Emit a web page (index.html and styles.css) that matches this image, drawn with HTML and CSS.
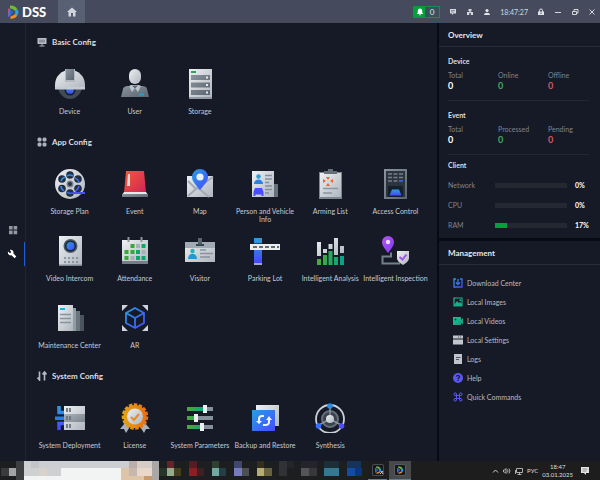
FILE: index.html
```html
<!DOCTYPE html>
<html lang="en">
<head>
    <meta charset="UTF-8">
    <meta name="viewport" content="width=device-width, initial-scale=1.0">
    <title>DSS</title>
    <link rel="stylesheet" href="styles.css">
</head>
<body>
    <!-- shared gradients and symbols -->
    <svg class="defs" aria-hidden="true">
        <defs>
            <linearGradient id="light" x1="0" y1="0" x2="1" y2="1"><stop offset="0" stop-color="#eef0f2"/><stop offset="1" stop-color="#aeb5be"/></linearGradient>
            <linearGradient id="grey" x1="0" y1="0" x2="1" y2="1"><stop offset="0" stop-color="#8b959f"/><stop offset="1" stop-color="#5b6570"/></linearGradient>
            <linearGradient id="blue" x1="0" y1="0" x2="0" y2="1"><stop offset="0" stop-color="#28a0e0"/><stop offset="1" stop-color="#4747ff"/></linearGradient>
            <linearGradient id="sky" x1="0" y1="0" x2="1" y2="1"><stop offset="0" stop-color="#289ee0"/><stop offset="1" stop-color="#464cff"/></linearGradient>
            <linearGradient id="green" x1="0" y1="0" x2="1" y2="0"><stop offset="0" stop-color="#4eaa30"/><stop offset="1" stop-color="#00a58c"/></linearGradient>
            <linearGradient id="teal" x1="0" y1="0" x2="1" y2="1"><stop offset="0" stop-color="#24c08e"/><stop offset="1" stop-color="#109a82"/></linearGradient>
            <linearGradient id="red" x1="0" y1="0" x2="1" y2="1"><stop offset="0" stop-color="#f35b35"/><stop offset="1" stop-color="#d02359"/></linearGradient>
            <linearGradient id="purple" x1="0" y1="0" x2="1" y2="1"><stop offset="0" stop-color="#b557e5"/><stop offset="1" stop-color="#8238ff"/></linearGradient>
            <linearGradient id="orange" x1="0" y1="0" x2="1" y2="0"><stop offset="0" stop-color="#e3a316"/><stop offset="1" stop-color="#e96f16"/></linearGradient>
            <linearGradient id="edge" x1="0" y1="0" x2="0" y2="1"><stop offset="0" stop-color="#e8455a"/><stop offset="1" stop-color="#2b7cf0"/></linearGradient>
        </defs>
        <symbol id="logo" viewBox="0 0 12 14">
            <path d="M1 3.500l2 .5v7L1 12z" fill="url(#edge)"/>
            <path d="M3 3.500l3.500 3.500L3 11z" fill="#2469d8"/>
            <path d="M3 .5C6 .3 9 1.500 10.300 4L7.500 5.800C6.500 4.300 5 3.500 3 3.500z" fill="#74bb2f"/>
            <path d="M10.300 4c1.600 2 1.400 4.700 0 6.700L7.800 9c.8-1.200.7-2.200-.3-3.200z" fill="#22a6e6"/>
            <path d="M10.300 10.700C8.500 13 6 14 3 13.500L4 11c1.700 0 3-.8 3.800-2z" fill="#f78b22"/>
        </symbol>
    </svg>

    <header class="titlebar">
        <div class="brand">
            <svg class="logo" aria-hidden="true"><use href="#logo"/></svg>
            <span>DSS</span>
        </div>
        <button class="home" aria-label="Home">
            <svg width="10" height="10" viewBox="0 0 10 10"><path d="M5 .5L.5 4.500V5H1.500v4.500h2.500V6h2v3.500h2.500V5h1v-.5z" fill="#d2d5dc"/></svg>
        </button>
        <div class="tools">
            <button class="alarm" aria-label="Alarms">
                <span class="bell"><svg width="8" height="8" viewBox="0 0 8 8"><path d="M4 .5C2.500.5 1.800 1.700 1.800 3v1.500L.8 6h6.400l-1-1.500V3C6.200 1.700 5.500.5 4 .5zM3 6.500h2c0 1.200-2 1.200-2 0z" fill="#fff"/></svg></span>
                <span class="count">0</span>
            </button>
            <button class="tool" aria-label="Messages"><svg width="8" height="8" viewBox="0 0 8 8"><path d="M1 1h6v4.500H4.500L3 7V5.500H1z" fill="#d5d7dc"/><path d="M2 2.500h4M2 4h3" stroke="#6b7080" stroke-width=".7"/></svg></button>
            <button class="tool" aria-label="Network"><svg width="8" height="8" viewBox="0 0 8 8"><path d="M2.500 1h3v2.200H4.500v.8H7V7H4.800V4.900H3.200V7H1V4h2.500v-.8h-1z" fill="#d5d7dc"/></svg></button>
            <button class="tool" aria-label="Account"><svg width="8" height="8" viewBox="0 0 8 8"><circle cx="4" cy="2.500" r="1.600" fill="#e2e4e8"/><path d="M1 7c0-3 6-3 6 0z" fill="#e2e4e8"/></svg></button>
            <time class="clock">18:47:27</time>
            <button class="tool" aria-label="Lock"><svg width="8" height="8" viewBox="0 0 8 8"><path d="M2.500 4V2.500a1.500 1.500 0 013 0V4" fill="none" stroke="#e2e4e8"/><path d="M1 3.500h6V7H1z" fill="#e2e4e8"/><path d="M4 4.500v1.500" stroke="#454a5c"/></svg></button>
            <button class="tool" aria-label="Minimize"><svg width="8" height="8" viewBox="0 0 8 8"><path d="M1 4.500h6" stroke="#d5d7dc"/></svg></button>
            <button class="tool" aria-label="Restore"><svg width="8" height="8" viewBox="0 0 8 8"><path d="M1.500 3.500h4v3h-4zM3 3.500v-2h4v3.500H5.500" fill="none" stroke="#d5d7dc"/></svg></button>
            <button class="tool" aria-label="Close"><svg width="8" height="8" viewBox="0 0 8 8"><path d="M1.500 1.500l5 5m0-5l-5 5" stroke="#d5d7dc"/></svg></button>
        </div>
    </header>

    <div class="workspace">
        <nav class="sidebar">
            <button aria-label="Applications"><svg width="10" height="10" viewBox="0 0 10 10"><path d="M1 1h3.600v3.600H1zM5.600 1h3.600v3.600H5.600zM1 5.600h3.600v3.600H1zM5.600 5.600h3.600v3.600H5.600z" fill="#9597a0"/></svg></button>
            <button class="active" aria-label="Configuration"><svg width="10" height="10" viewBox="0 0 10 10"><path d="M1 2.500l2 1.800L4.300 3 2.800 1C5 .3 7.200 2 6.300 4.300L9.300 7.500 7.600 9.200 4.500 6.300C2.300 7 .3 4.800 1 2.500z" fill="#fff"/></svg></button>
        </nav>

        <main class="content">
            <section class="group">
                <h2><svg width="10" height="10" viewBox="0 0 10 10"><path d="M.5 1h9v6h-9z" fill="#b9bcc5"/><path d="M2 2.500h6v3H2z" fill="#8b909b"/><path d="M5 7v1.500M2.500 9h5" stroke="#b9bcc5"/></svg>Basic Config</h2>
                <div class="tiles">
                    <button class="tile">
                        <svg viewBox="0 0 30 30"><path d="M3 19h24c-1 6-6 11-12 11S4 25 3 19z" fill="#404b55"/><circle cx="15" cy="21" r="5.500" fill="#172130"/><circle cx="15" cy="21" r="3.800" fill="url(#blue)"/><path d="M0 20v-4C0 7 7 1 15 1s15 6 15 15v4z" fill="url(#light)"/><path d="M0 18h30v2.500H0z" fill="#c6cbd1"/><path d="M10 0h10v13H10z" fill="#b2b9c1"/><path d="M11 0h8v11h-8z" fill="url(#grey)"/></svg>
                        <span>Device</span>
                    </button>
                    <button class="tile">
                        <svg viewBox="0 0 30 30"><rect x="9" y="0" width="12" height="15" rx="6" fill="url(#light)"/><path d="M1 28l2-8q0-2 4-3h16q4 1 4 3l2 8z" fill="url(#grey)"/><path d="M9 17l3 6 3-4 3 4 3-6-2-1h-8z" fill="#bcc3ca"/><path d="M12 16.500h6l-3 3z" fill="#5a6570"/><path d="M19 24.500h5v2h-5z" fill="#12a5dc"/></svg>
                        <span>User</span>
                    </button>
                    <button class="tile">
                        <svg viewBox="0 0 30 30"><path d="M4 0h23v30H4z" fill="url(#light)"/><path d="M6 2h5v2H6z" fill="#1fae4a"/><path d="M6 6h19v5H6zM6 13.500h19v5H6zM6 21h19v5H6z" fill="url(#grey)"/><path d="M21 7.500h2v2h-2zM21 15h2v2h-2zM21 22.500h2v2h-2z" fill="#e6e9eb"/><path d="M4 28h23v2H4z" fill="#8e98a2"/></svg>
                        <span>Storage</span>
                    </button>
                </div>
            </section>

            <section class="group">
                <h2><svg width="10" height="10" viewBox="0 0 10 10"><g fill="#aeb2bd"><rect x=".5" y=".5" width="4" height="4" rx="1.500"/><rect x="5.500" y=".5" width="4" height="4" rx="1.500"/><rect x=".5" y="5.500" width="4" height="4" rx="1.500"/><rect x="5.500" y="5.500" width="4" height="4" rx="1.500"/></g></svg>App Config</h2>
                <div class="tiles">
                    <button class="tile">
                        <svg viewBox="0 0 30 30"><circle cx="15" cy="15" r="15" fill="url(#light)"/><g fill="#222e3d"><circle cx="15" cy="6" r="3.800"/><circle cx="23" cy="10" r="3.800"/><circle cx="23" cy="19.500" r="3.800"/><circle cx="15" cy="24" r="3.800"/><circle cx="7" cy="19.500" r="3.800"/><circle cx="7" cy="10" r="3.800"/></g><g fill="none" stroke="url(#sky)" stroke-width="1.600"><path d="M12 7q3-2 6 0M20 9q3 1 4 4M24 17q-1 4-4 5M17 24q-3 1-5-1M9 22q-3-2-3-5M6 12q1-3 4-4"/></g><circle cx="15" cy="15" r="3.500" fill="#77818d"/><circle cx="15" cy="15" r="2" fill="#253241"/><path d="M18 23h12v2H16z" fill="#4c4eff"/></svg>
                        <span>Storage Plan</span>
                    </button>
                    <button class="tile">
                        <svg viewBox="0 0 30 30"><path d="M6 2h18l2 22H4z" fill="url(#red)"/><path d="M8 5h2v12H7z" fill="#ffd8d2"/><path d="M4 23h22l2 3H2z" fill="#e6e8ea"/><path d="M2 25h26v3H2z" fill="url(#grey)"/></svg>
                        <span>Event</span>
                    </button>
                    <button class="tile">
                        <svg viewBox="0 0 30 30"><path d="M2 7h26v21H2z" fill="url(#light)"/><path d="M3 12l8 8 17-12M3 27l8-7M12 18l12 10" fill="none" stroke="#a1aab3" stroke-width="2"/><path d="M15 21C10 15 7 12 7 8a8 8 0 0116 0c0 4-3 7-8 13z" fill="url(#sky)"/><circle cx="15" cy="8" r="3.600" fill="#e9f0f8"/></svg>
                        <span>Map</span>
                    </button>
                    <button class="tile">
                        <svg viewBox="0 0 30 30"><path d="M22 15h6v13h-6z" fill="#65717c"/><path d="M2 2h22v26H2z" fill="url(#light)"/><circle cx="8.500" cy="7.500" r="2.200" fill="#269fe1"/><path d="M4 15c0-6 9-6 9 0z" fill="#297fec"/><path d="M5 19h7l1.500 4v4h-2v-1.500h-6V27h-2v-4z" fill="#454fff"/><path d="M15 6.500h7M15 10h7M15 13.500h4M15 17h7M15 20.500h7M15 24h4" stroke="#83909c" stroke-width="1.500"/></svg>
                        <span>Person and Vehicle Info</span>
                    </button>
                    <button class="tile">
                        <svg viewBox="0 0 30 30"><path d="M4 3h23v27H4z" fill="#7b8690"/><path d="M5 4h21v24H5z" fill="url(#light)"/><path d="M9 5V2h4V0h5v2h4v3z" fill="#65707b"/><path d="M11 8h4l-2 3zM11 17h4l-2-3zM8 10v4l3-2zM18 10v4l-3-2z" fill="#ed642c"/><path d="M8 19.500h15M8 24h9" stroke="#8c97a1" stroke-width="1.500"/></svg>
                        <span>Arming List</span>
                    </button>
                    <button class="tile">
                        <svg viewBox="0 0 30 30"><path d="M4 0h23v30H4z" fill="url(#grey)"/><path d="M6 2h19v26H6z" fill="#2b343f"/><path d="M8 5h4M13.500 5h4M19 5h4M8 8.500h4M13.500 8.500h4M19 8.500h4M8 12h4M13.500 12h4" stroke="#75808b" stroke-width="1.500"/><path d="M19 12h4" stroke="#386dff" stroke-width="1.500"/><path d="M8 17h15v11H8z" fill="#171f2d"/><path d="M12 20.500h7l2.500 6h-12z" fill="url(#blue)"/></svg>
                        <span>Access Control</span>
                    </button>
                    <button class="tile">
                        <svg viewBox="0 0 30 30"><path d="M4 0h23v30H4z" fill="url(#light)"/><circle cx="15.500" cy="10" r="7" fill="#4c5b68"/><circle cx="15.500" cy="10" r="5.500" fill="#1a2534"/><circle cx="15.500" cy="10" r="4" fill="url(#sky)"/><path d="M9 22h14M9 26h14" stroke="#7a8590" stroke-width="1.500" stroke-dasharray="2 2"/><path d="M4 28.500h23V30H4z" fill="#7b8690"/></svg>
                        <span>Video Intercom</span>
                    </button>
                    <button class="tile">
                        <svg viewBox="0 0 30 30"><path d="M2 4h26v23H2z" fill="url(#light)"/><path d="M2 25h26v3H2z" fill="#737e88"/><path d="M8.500 1v5M21.500 1v5" stroke="#8d96a0" stroke-width="2"/><path d="M10.500 8h4v4h-4zM4.500 14h4v4h-4zM10.500 14h4v4h-4zM4.500 20h4v4h-4z" fill="#35a934"/><path d="M21.500 8h4v4h-4zM16 14h4v4h-4zM16 20h4v4h-4zM21.500 20h4v4h-4z" fill="#08a969"/><path d="M16 8h4v4h-4zM21.500 14h4v4h-4zM10.500 20h4v4h-4z" fill="#a5b0b7"/></svg>
                        <span>Attendance</span>
                    </button>
                    <button class="tile">
                        <svg viewBox="0 0 30 30"><path d="M0 6h30v20H0z" fill="url(#light)"/><path d="M0 6h30v6H0z" fill="#a1abb5"/><path d="M13 2h4v8h-4z" fill="#596570"/><path d="M11 8h8v2h-8z" fill="#384552"/><circle cx="7.500" cy="15" r="2.200" fill="#17b7bc"/><path d="M3 23c0-7 9-7 9 0z" fill="#199bd9"/><path d="M15 14h6M15 17.500h13M15 21h10" stroke="#87939e" stroke-width="1.500"/></svg>
                        <span>Visitor</span>
                    </button>
                    <button class="tile">
                        <svg viewBox="0 0 30 30"><path d="M4 2h8v25H4z" fill="url(#blue)"/><path d="M4 7h8v2H4z" fill="#26415b"/><path d="M4 27h8v2H4z" fill="#9eabb9"/><path d="M0 8h30v6H0z" fill="#eceeee"/><path d="M3 11h26" stroke="#35404b" stroke-width="1.500" stroke-dasharray="4 2"/></svg>
                        <span>Parking Lot</span>
                    </button>
                    <button class="tile">
                        <svg viewBox="0 0 30 30"><path d="M2 6h4v14H2zM8 13h4v4H8zM13.500 8h4v5h-4zM19 2h4v17h-4zM25 10h4v7h-4z" fill="url(#light)"/><path d="M2 23h4v6H2zM8 19h4v10H8zM13.500 15h4v14h-4zM19 21h4v8h-4zM25 20h4v9h-4z" fill="url(#green)"/></svg>
                        <span>Intelligent Analysis</span>
                    </button>
                    <button class="tile">
                        <svg viewBox="0 0 30 30"><path d="M11 16.500v4H2.500v7H20" fill="none" stroke="#74808b" stroke-width="2"/><path d="M8 17C4 12 2 9 2 6a6 6 0 0112 0c0 3-2 6-6 11z" fill="url(#purple)"/><circle cx="8" cy="6" r="2.200" fill="#e8dff4"/><path d="M17 15h12v7c0 3-3 5-6 7-3-2-6-4-6-7z" fill="url(#light)"/><path d="M19.500 21l3 2.500 4-5" fill="none" stroke="#a155ed" stroke-width="2"/></svg>
                        <span>Intelligent Inspection</span>
                    </button>
                    <button class="tile">
                        <svg viewBox="0 0 30 30"><path d="M22 12h7v16h-7z" fill="#49545f"/><path d="M18 8h7v20h-7z" fill="#69757f"/><path d="M14 5h7v23h-7z" fill="#929ca5"/><path d="M3 2h15v26H3z" fill="url(#light)"/><path d="M5 6h5" stroke="#19b4d1" stroke-width="2"/><path d="M5 11.500h11M5 15.500h11M5 19.500h11" stroke="#88939d" stroke-width="1.500"/></svg>
                        <span>Maintenance Center</span>
                    </button>
                    <button class="tile">
                        <svg viewBox="0 0 30 30"><path d="M2 2h6L2 8zM22 2h6v6zM2 22v6h6zM28 22v6h-6z" fill="#cdd3d9"/><path d="M15 5l9 5v10l-9 5-9-5V10zM6 10l9 5 9-5M15 15v10" fill="none" stroke="url(#sky)" stroke-width="1.800"/></svg>
                        <span>AR</span>
                    </button>
                </div>
            </section>

            <section class="group">
                <h2><svg width="10" height="10" viewBox="0 0 10 10"><path d="M2.500.5v8M.5 6.500l2 2.500V.5M7.500 9.500V1M5.500 3.500l2-2.500 2 2.500" fill="none" stroke="#b6b9c2" stroke-width="1.600"/></svg>System Config</h2>
                <div class="tiles">
                    <button class="tile">
                        <svg viewBox="0 0 30 30"><path d="M9 9.500H4V3M9 20.500H4V27" fill="none" stroke="url(#blue)" stroke-width="3.500"/><path d="M0 13.500h9V17H0z" fill="#2d7bea"/><path d="M9 3h21v24H9z" fill="url(#light)"/><path d="M9 11h21v8H9z" fill="url(#grey)" opacity=".65"/><path d="M12 5v4M15 5v4M12 13v4M15 13v4M12 21v4M15 21v4" stroke="#69747f" stroke-width="1.800"/></svg>
                        <span>System Deployment</span>
                    </button>
                    <button class="tile">
                        <svg viewBox="0 0 30 30"><path d="M5 20l-5 6 4 0 2 4 5-8zM25 20l5 6-4 0-2 4-5-8z" fill="#a9b2ba"/><circle cx="15" cy="13.500" r="11.500" fill="url(#orange)"/><circle cx="15" cy="13.500" r="12" fill="none" stroke="url(#orange)" stroke-width="2.500" stroke-dasharray="3.500 1.500"/><circle cx="15" cy="13.500" r="8" fill="url(#light)"/><path d="M11 14l3 3 5-6" fill="none" stroke="#e58c22" stroke-width="2"/></svg>
                        <span>License</span>
                    </button>
                    <button class="tile">
                        <svg viewBox="0 0 30 30"><path d="M2 4h26v4H2zM2 13h26v4H2zM2 22h26v4H2z" fill="#84909c"/><path d="M2 4h18v4H2zM2 13h9v4H2zM2 22h14v4H2z" fill="url(#green)"/><path d="M18 2h4v8h-4zM9 11h4v8H9zM15 20h4v8h-4z" fill="#edf0f1"/></svg>
                        <span>System Parameters</span>
                    </button>
                    <button class="tile">
                        <svg viewBox="0 0 30 30"><path d="M6 2h23v21H6z" fill="url(#light)"/><path d="M2 7h23v21H2z" fill="url(#sky)"/><path d="M14 13h-2q-3 0-3 3v4M13 22h2q4 0 4-3v-4" fill="none" stroke="#eff5ff" stroke-width="2"/><path d="M6 18h6l-3 3zM16 17h6l-3-4z" fill="#eff5ff"/></svg>
                        <span>Backup and Restore</span>
                    </button>
                    <button class="tile">
                        <svg viewBox="0 0 30 30"><circle cx="15" cy="16" r="14" fill="none" stroke="#cad0d6" stroke-width="1.800"/><circle cx="15" cy="16" r="8" fill="#39434e" stroke="#66717c" stroke-width="2"/><path d="M15 2v14L4 22M15 16l11 6" fill="none" stroke="#8a959f" stroke-width="1.500"/><circle cx="15" cy="16" r="4" fill="url(#light)"/><circle cx="15" cy="3" r="2.800" fill="#278bed"/><circle cx="3.500" cy="23" r="2.800" fill="#346dff"/><circle cx="26.500" cy="23" r="2.800" fill="#504dff"/></svg>
                        <span>Synthesis</span>
                    </button>
                </div>
            </section>
        </main>

        <aside class="panels">
            <section class="panel">
                <h2>Overview</h2>
                <div class="overview">
                    <div class="stats">
                        <h3>Device</h3>
                        <dl>
                            <div><dt>Total</dt><dd>0</dd></div>
                            <div><dt>Online</dt><dd class="good">0</dd></div>
                            <div><dt>Offline</dt><dd class="bad">0</dd></div>
                        </dl>
                    </div>
                    <div class="stats">
                        <h3>Event</h3>
                        <dl>
                            <div><dt>Total</dt><dd>0</dd></div>
                            <div><dt>Processed</dt><dd class="good">0</dd></div>
                            <div><dt>Pending</dt><dd class="bad">0</dd></div>
                        </dl>
                    </div>
                    <div class="client">
                        <h3>Client</h3>
                        <div class="usage"><span>Network</span><div class="bar"><div class="fill" style="width: 0%"></div></div><b>0%</b></div>
                        <div class="usage"><span>CPU</span><div class="bar"><div class="fill" style="width: 0%"></div></div><b>0%</b></div>
                        <div class="usage"><span>RAM</span><div class="bar"><div class="fill" style="width: 17%"></div></div><b>17%</b></div>
                    </div>
                </div>
            </section>
            <section class="panel management">
                <h2>Management</h2>
                <nav class="links">
                    <a href="#"><svg viewBox="0 0 10 10"><path d="M3 1H1v8h8V1H7M5 1v5M3 4.500l2 2 2-2" fill="none" stroke="url(#sky)" stroke-width="1.300"/></svg>Download Center</a>
                    <a href="#"><svg viewBox="0 0 10 10"><path d="M1 1h8v8H1z" fill="none" stroke="url(#teal)" stroke-width="1.200"/><path d="M1 8l3-4 2 2 1-1 2 2v2H1z" fill="#17ad89"/><path d="M6.500 2.500H8V4H6.500z" fill="#20bd91"/></svg>Local Images</a>
                    <a href="#"><svg viewBox="0 0 10 10"><path d="M0 1h8v3l2-2v6.500L8 7v2H0z" fill="url(#teal)"/><path d="M2.500 2.500v2M1.500 3.500h2" stroke="#14503f"/></svg>Local Videos</a>
                    <a href="#"><svg viewBox="0 0 10 10"><path d="M0 .5h10v3H0zM0 4.500h10v5H0z" fill="#c4c6cd"/><path d="M5 2h1M7 2h1" stroke="#4c5260"/></svg>Local Settings</a>
                    <a href="#"><svg viewBox="0 0 10 10"><path d="M1 0h8v10H1z" fill="#c0c3cb"/><path d="M3 3.500h4.500M3 5.500h3" stroke="#4e5563" stroke-width="1.200"/></svg>Logs</a>
                    <a href="#"><svg viewBox="0 0 10 10"><circle cx="5" cy="5" r="5" fill="#5957ef"/><path d="M3.300 3.500C4 2 6.800 2.300 6.500 4c-.2 1-1.500 1-1.500 2.200M5 7v1" fill="none" stroke="#171b27" stroke-width="1.200"/></svg>Help</a>
                    <a href="#"><svg viewBox="0 0 10 10"><path d="M3.500 3.500h3v3h-3zM3.500 3.500H2A1.300 1.300 0 113.500 2zM6.500 3.500V2A1.300 1.300 0 118 3.500zM6.500 6.500H8A1.300 1.300 0 116.500 8zM3.500 6.500V8A1.300 1.300 0 112 6.500z" fill="none" stroke="#5b59f3"/></svg>Quick Commands</a>
                </nav>
            </section>
        </aside>
    </div>

    <footer class="taskbar">
        <!-- pinned items -->
        <svg class="pinned" width="368" height="19" viewBox="0 0 368 19" shape-rendering="crispEdges" aria-hidden="true">
            <path d="M0 0h368v19H0z" fill="#1d1e20"/>
            <path d="M1 7h8v8H1z" fill="#3b3b3c"/><path d="M9 7h7v8H9z" fill="#a5a5a5"/><path d="M16 0h8v19h-8z" fill="#3d3e40"/>
            <path d="M24 0h135v19H24z" fill="#f2f3f3"/><path d="M24 0h128v7H24z" fill="#cdced2"/><path d="M24 7h37v8H24z" fill="#cfd0d2"/><path d="M31 0h8v7h-8z" fill="#c3c4c7"/><path d="M39 7h8v8h-8z" fill="#d6d3cd"/>
            <path d="M121 7h31v12h-31z" fill="#dfc5a8"/><path d="M129 0h8v7h-8z" fill="#bdaeaa"/><path d="M129 7h8v8h-8z" fill="#c7b8af"/><path d="M137 0h15v7h-15z" fill="#d8ccc6"/><path d="M137 7h15v8h-15z" fill="#e7d8ca"/><path d="M144 15h8v4h-8z" fill="#c79b6b"/><path d="M152 0h7v19h-7z" fill="#aaa8a7"/>
            <path d="M159 7h8v8h-8z" fill="#263526"/><path d="M167 0h7v7h-7z" fill="#672326"/><path d="M167 7h7v8h-7z" fill="#93ad8c"/><path d="M174 7h7v8h-7z" fill="#463f1e"/>
            <path d="M189 0h8v7h-8z" fill="#531d21"/><path d="M189 7h8v8h-8z" fill="#8b1f24"/><path d="M197 7h7v8h-7z" fill="#3d2023"/>
            <path d="M212 0h7v7h-7z" fill="#303f32"/><path d="M212 7h7v8h-7z" fill="#72aaa3"/><path d="M219 7h7v8h-7z" fill="#243e47"/>
            <path d="M234 0h8v7h-8z" fill="#40466c"/><path d="M234 7h8v8h-8z" fill="#767bbd"/><path d="M242 7h7v8h-7z" fill="#4c5054"/>
            <path d="M257 0h7v7h-7z" fill="#342f1d"/><path d="M257 7h7v8h-7z" fill="#b6ae70"/><path d="M264 7h8v8h-8z" fill="#67613e"/>
            <path d="M279 0h8v15h-8z" fill="#313236"/><path d="M287 0h7v7h-7z" fill="#242529"/>
            <path d="M301 0h16v7h-16z" fill="#25232b"/><path d="M301 7h8v8h-8z" fill="#555557"/><path d="M309 7h8v8h-8z" fill="#37383a"/>
            <path d="M324 0h15v7h-15z" fill="#1d2f36"/><path d="M324 7h15v8h-15z" fill="#377891"/>
            <path d="M347 0h14v7h-14z" fill="#16345a"/><path d="M347 7h8v8h-8z" fill="#124da4"/><path d="M355 7h7v8h-7z" fill="#0b3482"/>
        </svg>
        <button class="app" aria-label="DSS"><svg width="12" height="12" viewBox="0 0 12 12"><rect width="12" height="12" rx="2" fill="#484b51"/><rect x="1" y="1" width="10" height="10" rx="1" fill="#161922"/><use href="#logo" x="2" y="2" width="8" height="8"/><path d="M8 10l3-3M9 7l2 3" stroke="#c1c4c9"/></svg></button>
        <button class="app current" aria-label="DSS client"><svg width="12" height="12" viewBox="0 0 12 12"><rect width="12" height="12" rx="2" fill="#555960"/><rect x="1" y="1" width="10" height="10" rx="1" fill="#161922"/><use href="#logo" x="2" y="2" width="8" height="8"/></svg></button>
        <div class="tray">
            <svg width="7" height="8" viewBox="0 0 7 8"><path d="M1 5.500L3.500 3 6 5.500" fill="none" stroke="#d2d2d2"/></svg>
            <svg width="8" height="8" viewBox="0 0 8 8"><path d="M.5 3h1L3 1.500v5L1.500 5h-1zM4.500 2.500q1 1.500 0 3M6 1.500q2 2.500 0 5" fill="none" stroke="#d2d2d2" stroke-width=".8"/></svg>
            <svg width="8" height="8" viewBox="0 0 8 8"><path d="M1.500 1.500h6v4h-6zM4.500 5.500v2M2.500 7.500h4M.5 3v4" fill="none" stroke="#d2d2d2" stroke-width=".8"/></svg>
            <span lang="ru">РУС</span>
            <time class="date">18:47<br>03.01.2025</time>
            <svg class="notice" width="10" height="10" viewBox="0 0 10 10"><path d="M1 1h8v6H6v2L4 7H1z" fill="#e3e3e3"/><path d="M2.500 3h5M2.500 5h4" stroke="#77797c" stroke-width=".8"/></svg>
        </div>
    </footer>
</body>
</html>
```
FILE: styles.css
```css
* {
    box-sizing: border-box;
}
body {
    margin: 0;
    min-height: 100vh;
    display: flex;
    flex-direction: column;
    font-family: Lato, sans-serif;
    font-size: 7px;
    line-height: 8px;
    color: #c8cad0;
    background: #060a13;
}
h2, h3, dl, dd {
    margin: 0;
}
button {
    padding: 0;
    border: 0;
    background: none;
    font: inherit;
    color: inherit;
    cursor: pointer;
}
svg {
    display: block;
    flex-shrink: 0;
}
.defs {
    position: absolute;
    width: 0;
    height: 0;
}

/* title bar */
.titlebar {
    display: flex;
    height: 23px;
    background: #454b5d;
}
.brand {
    display: flex;
    align-items: center;
    gap: 3px;
    width: 58px;
    padding-left: 7px;
    color: #fff;
    font-size: 13px;
    font-weight: 900;
}
.logo {
    width: 12px;
    height: 14px;
}
.home {
    display: flex;
    align-items: center;
    justify-content: center;
    width: 27px;
    background: #586074;
}
.tools {
    display: flex;
    align-items: center;
    gap: 9px;
    margin-left: auto;
    padding-right: 4px;
}
.alarm {
    display: flex;
    height: 12px;
    border: 1px solid #169143;
    background: #3a505a;
}
.bell {
    display: flex;
    align-items: center;
    justify-content: center;
    width: 11px;
    height: 10px;
    background: #00a33b;
}
.count {
    width: 14px;
    font-size: 8px;
    line-height: 10px;
    color: #e2e5ea;
}
.clock {
    color: #d5d7dc;
}

/* main area */
.workspace {
    flex: 1;
    display: flex;
}
.sidebar {
    display: flex;
    flex-direction: column;
    justify-content: center;
    width: 26px;
    background: #161a26;
    border-right: 1px solid #202531;
}
.sidebar button {
    display: flex;
    align-items: center;
    justify-content: center;
    height: 24px;
}
.sidebar .active {
    border-right: 1px solid #1f5cd6;
}
.content {
    flex: 1;
    padding: 14px 9px 0 11px;
    background: #161a26;
}
.group {
    margin-bottom: 14px;
}
.group:last-child {
    margin-bottom: 0;
}
.group h2 {
    display: flex;
    align-items: center;
    gap: 5px;
    margin-bottom: 22px;
    font-size: 8px;
    line-height: 10px;
    color: #dcdee2;
}
.tiles {
    display: grid;
    grid-template-columns: repeat(6, 1fr);
    row-gap: 13px;
}
.tile {
    display: flex;
    flex-direction: column;
    align-items: center;
    gap: 8px;
    height: 54px;
}
.tile svg {
    width: 30px;
    height: 30px;
}

/* right column */
.panels {
    display: flex;
    flex-direction: column;
    gap: 3px;
    width: 163px;
    padding-left: 2px;
}
.panel {
    background: #161a26;
}
.panel h2 {
    padding: 1px 9px 0;
    border-bottom: 1px solid #272c37;
    font-size: 8px;
    line-height: 22px;
    color: #e6e7ea;
}
.panel h3 {
    font-size: 7px;
    line-height: 8px;
    color: #dcdee2;
}
.management {
    flex: 1;
}
.overview {
    padding: 10px 11px 9px 9px;
}
.stats {
    margin-bottom: 6px;
    padding-bottom: 9px;
    border-bottom: 1px solid #222732;
}
.stats:first-child {
    margin-bottom: 10px;
}
.stats dl {
    display: grid;
    grid-template-columns: 50px 50px 1fr;
    margin-top: 6px;
}
dt {
    color: #7f838c;
}
dd {
    margin-top: 2px;
    font-size: 9px;
    line-height: 10px;
    font-weight: bold;
    color: #fff;
}
.good {
    color: #43aa64;
}
.bad {
    color: #d95763;
}
.usage {
    display: grid;
    grid-template-columns: 47px 1fr 14px;
    align-items: center;
    margin-top: 12px;
    color: #7f838c;
}
.usage b {
    color: #fff;
}
.bar {
    height: 5px;
    margin-right: 8px;
    background: #232833;
}
.fill {
    height: 100%;
    background: #00a33b;
}
.links {
    display: flex;
    flex-direction: column;
    padding: 8px 14px;
}
.links a {
    display: flex;
    align-items: center;
    gap: 4px;
    height: 19px;
    color: #b9bbc1;
    text-decoration: none;
}
.links svg {
    width: 10px;
    height: 10px;
}

/* taskbar */
.taskbar {
    display: flex;
    height: 19px;
    background: #1d1d1e;
    color: #dedede;
    font-size: 6px;
}
.app {
    display: flex;
    align-items: center;
    justify-content: center;
    width: 19px;
    margin-right: 2px;
    border-bottom: 1px solid #67809a;
}
.current {
    width: 22px;
    background: #48494b;
}
.tray {
    display: flex;
    align-items: center;
    gap: 4px;
    margin-left: auto;
    padding-right: 10px;
}
.date {
    margin-right: 3px;
    text-align: center;
    white-space: nowrap;
}
```
